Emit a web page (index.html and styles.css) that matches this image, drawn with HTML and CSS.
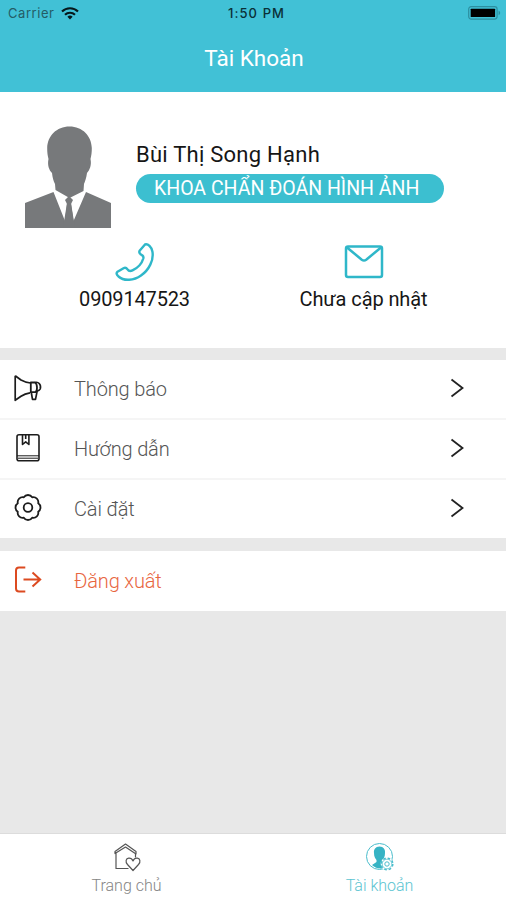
FILE: index.html
```html
<!DOCTYPE html>
<html lang="vi">
<head>
    <meta charset="UTF-8">
    <meta name="viewport" content="width=device-width, initial-scale=1.0">
    <link rel="stylesheet" href="styles.css">
    <title>Tài Khoản</title>
</head>
<body>

    <header class="header">
        <div class="status-bar">
            <div class="carrier">
                <span>Carrier</span>
                <svg width="18" height="13" viewBox="0 0 18 13" fill="none" stroke="#06181b" stroke-width="2.1">
                    <path d="M1 4.6a11.4 11.4 0 0 1 16 0"/>
                    <path d="M4 7.8a7.1 7.1 0 0 1 10 0"/>
                    <path d="M9 12.4L6.4 9.8a3.8 3.8 0 0 1 5.2 0z" fill="#06181b" stroke="none"/>
                </svg>
            </div>
            <span class="time">1:50 PM</span>
            <div class="battery">
                <svg width="33" height="14" viewBox="0 0 33 14">
                    <rect x="0.7" y="0.7" width="28.4" height="12.4" rx="2.5" fill="none" stroke="#2c8fa0" stroke-width="1.2"/>
                    <rect x="2.7" y="2.7" width="24.4" height="8.4" rx="0.6" fill="#000"/>
                    <path d="M30.6 4.8v4.4q1.6-.6 1.6-2.2t-1.6-2.2z" fill="#2c8fa0"/>
                </svg>
            </div>
        </div>
        <h1 class="title">Tài Khoản</h1>
    </header>

    <section class="profile">
        <div class="person">
            <svg class="avatar" width="88" height="103" viewBox="0 0 88 103" fill="#77797b">
                <path d="M45.500 .5C58.500 .5 67.500 10 67.800 22c.1 4-.5 8-1.300 11 1.300 6-.8 11-3.500 14-.7 5-1.800 8-3 11l-.5 7L45.500 72 31.500 64l-.5-6c-1.500-3-2.400-6-3-11-3-3-4.800-8-3.500-14-.8-3-1.400-7-1.300-11C23.500 10 32.500 .5 45.500 .5z"/>
                <path d="M29.500 66L1 77v25h86V77L62 66 49.500 95l-2.500-17 2-4-4-4-4 4 2 4L41 95z"/>
                <path d="M43 77h4l4 25H39z"/>
            </svg>
            <div class="info">
                <div class="name">Bùi Thị Song Hạnh</div>
                <div class="department">KHOA CHẨN ĐOÁN HÌNH ẢNH</div>
            </div>
        </div>
        <div class="contacts">
            <div class="contact phone">
                <svg width="40" height="38" viewBox="0 0 40 38" fill="none" stroke="#2fb7c9" stroke-width="2.4" stroke-linejoin="round">
                    <path d="M30 1.500C33 .5 36.500 4 37.400 8.500 39 17 34 27 26 32.500 19 37.500 9 38.500 3.500 33.500 1.500 31.500 1 30 2.500 28.800L8.500 25.200c1.500-.8 3-.3 4 1.200 1.200 1.800 3 2 5 1C22.500 25 27 20 28.300 15.500c.5-2-.2-3-1.800-3.700-1.800-.8-2.600-2.300-1.900-4z"/>
                </svg>
                <span>0909147523</span>
            </div>
            <div class="contact mail">
                <svg width="40" height="38" viewBox="0 0 40 38" fill="none" stroke="#2fb7c9" stroke-width="2.5" stroke-linejoin="round">
                    <rect x="2" y="3.500" width="36" height="30.500" rx="2"/>
                    <path d="M3 4.500l14.800 12.200q2.200 1.700 4.400 0L37 4.500"/>
                </svg>
                <span>Chưa cập nhật</span>
            </div>
        </div>
    </section>

    <ul class="menu">
        <li class="item">
            <svg class="icon" width="30" height="30" viewBox="0 0 30 30" fill="none" stroke="#1c1c1c" stroke-width="1.700" stroke-linejoin="round">
                <path d="M2.200 2.700v24.600L8 23.200q4-2.700 9-3.400M2.200 2.700L8 7q4.500 2.400 9.500 3"/>
                <path d="M17.800 9.500v9.700h4.500q1.700-.9 1.700-4.500 0-4-2-5.200z" stroke-width="1.800"/>
                <path d="M22 9.500q2.500-.8 4.200 1 2 2.200 1 5.500-.8 1.800-3.400 2.200M18.300 19.500l1.200 6.800h3l1.600-8" stroke-width="1.700"/>
            </svg>
            <span class="label">Thông báo</span>
            <svg class="arrow" width="14" height="20" viewBox="0 0 14 20"><path d="M1.500 1.500L12.500 10l-11 8.500"/></svg>
        </li>
        <li class="item">
            <svg class="icon" width="30" height="30" viewBox="0 0 30 30" fill="none" stroke="#1c1c1c" stroke-width="1.600" stroke-linejoin="round">
                <rect x="4" y="1.800" width="22" height="26" rx="2"/>
                <path d="M4 22.800h22M5 25.200h20" stroke-width="1"/>
                <path d="M9.500 2v9.500l3.200-2.700 3.200 2.700V2M12.700 2v4"/>
            </svg>
            <span class="label">Hướng dẫn</span>
            <svg class="arrow" width="14" height="20" viewBox="0 0 14 20"><path d="M1.500 1.500L12.500 10l-11 8.500"/></svg>
        </li>
        <li class="item">
            <svg class="icon" width="30" height="30" viewBox="0 0 30 30" fill="none" stroke="#1c1c1c" stroke-width="1.800" stroke-linejoin="round">
                <path d="M10.800 4.300a5 5 0 0 1 8.400 0a5 5 0 0 1 6 6a5 5 0 0 1 0 8.400a5 5 0 0 1-6 6a5 5 0 0 1-8.400 0a5 5 0 0 1-6-6a5 5 0 0 1 0-8.400a5 5 0 0 1 6-6z"/>
                <circle cx="15" cy="14.500" r="4.300"/>
            </svg>
            <span class="label">Cài đặt</span>
            <svg class="arrow" width="14" height="20" viewBox="0 0 14 20"><path d="M1.500 1.500L12.500 10l-11 8.500"/></svg>
        </li>
    </ul>

    <ul class="menu">
        <li class="item logout">
            <svg class="icon" width="30" height="30" viewBox="0 0 30 30" fill="none" stroke="#dc4a20" stroke-width="2">
                <path d="M12.300 2.500H6Q3 2.500 3 5.500v18q0 3 3 3h6.300"/>
                <path d="M10.500 14.500h16M19.500 7.500l7.700 7-7.700 7"/>
            </svg>
            <span class="label">Đăng xuất</span>
        </li>
    </ul>

    <nav class="tab-bar">
        <a class="tab">
            <svg width="30" height="30" viewBox="0 0 30 30" fill="none" stroke="#555" stroke-width="1.200" stroke-linejoin="round">
                <path d="M3 11.500v-2L13.500 2 24 9.500v2.500L13.500 5zM4 11v15.500h12.500M23.500 12v3.500"/>
                <path d="M21 28.500l-5.500-6c-2.500-3-1.500-6 1.200-6.300 2-.2 3.500 1 4.300 2.800.8-1.800 2.300-3 4.300-2.800 2.700.3 3.700 3.300 1.200 6.300z"/>
            </svg>
            <span>Trang chủ</span>
        </a>
        <a class="tab active">
            <svg width="30" height="30" viewBox="0 0 30 30" fill="none" stroke="#4abdcc" stroke-width="1">
                <circle cx="14.500" cy="14.500" r="13"/>
                <path d="M14.500 4.500c4 0 6 3 5.500 6.500 0 3.500-1.200 5.700-2.500 7v2l3.500 1.500v4q-8 3-14-2.500l4.500-3v-2c-1.300-1.300-2.500-3.500-2.500-7C8.500 7.500 10.500 4.500 14.500 4.500z" fill="#36b3c4" stroke="none"/>
                <circle cx="22" cy="22" r="6.300" fill="#fff" stroke="none"/>
                <circle cx="22" cy="22" r="5.800" stroke-width="1.500" stroke-dasharray="2.600 1.950"/>
                <circle cx="22" cy="22" r="4.800" stroke-width=".7"/>
                <circle cx="22" cy="22" r="2.200"/>
            </svg>
            <span>Tài khoản</span>
        </a>
    </nav>

</body>
</html>
```
FILE: styles.css
```css
* {
    box-sizing: border-box;
}

body {
    margin: 0;
    height: 100vh;
    display: flex;
    flex-direction: column;
    font-family: Roboto, sans-serif;
    background-color: #e8e8e8;
    overflow: hidden;
}

svg {
    display: block;
    flex-shrink: 0;
}

.header {
    height: 92px;
    background-color: #41c1d6;
}

.status-bar {
    display: grid;
    grid-template-columns: 1fr auto 1fr;
    align-items: center;
    height: 26px;
    padding: 0 5px 0 8px;
    font-family: Inter, sans-serif;
    font-size: 13px;
    color: #245c66;
}

.carrier {
    display: flex;
    align-items: center;
    gap: 7px;
    letter-spacing: 0.55px;
}

.time {
    padding-left: 4px;
    font-weight: 500;
    color: #0a3037;
    letter-spacing: 1.1px;
}

.battery {
    justify-self: end;
}

.title {
    margin: 0;
    padding-left: 2px;
    line-height: 65px;
    font-size: 22.5px;
    font-weight: 400;
    text-align: center;
    color: #fff;
}

.profile {
    height: 256px;
    padding: 34px 0 0;
    background-color: #fff;
}

.person {
    display: flex;
    gap: 24px;
    padding-left: 24px;
}

.info {
    padding-top: 14px;
}

.name {
    font-size: 22px;
    line-height: 30px;
    letter-spacing: 0.25px;
    color: #161616;
}

.department {
    width: 308px;
    height: 29px;
    margin-top: 4px;
    padding-left: 18px;
    border-radius: 15px;
    background-color: #3cbfd0;
    font-size: 19.5px;
    line-height: 29px;
    white-space: nowrap;
    color: #fff;
}

.contacts {
    display: flex;
    padding: 14px 28px 0 20px;
}

.contact {
    flex: 1;
    display: flex;
    flex-direction: column;
    align-items: center;
    gap: 5px;
    font-size: 20px;
    line-height: 26px;
    color: #161616;
}

.phone {
    letter-spacing: -0.15px;
}

.mail {
    letter-spacing: -0.1px;
}

.menu {
    margin: 12px 0 0;
    padding: 0;
    list-style: none;
    background-color: #fff;
}

.menu + .menu {
    margin-top: 13px;
}

.item {
    display: flex;
    align-items: center;
    height: 60px;
    padding: 0 42px 2px 13px;
    border-bottom: 2px solid #f5f5f5;
}

.item:last-child {
    height: 58px;
    border-bottom: none;
}

.item.logout {
    height: 60px;
}

.label {
    flex: 1;
    margin-left: 31px;
    padding-top: 2px;
    font-size: 20px;
    font-weight: 300;
    letter-spacing: -0.15px;
    color: #555;
}

.logout .label {
    color: #e8663f;
}

.arrow {
    fill: none;
    stroke: #222;
    stroke-width: 1.8;
}

.tab-bar {
    display: flex;
    height: 67px;
    margin-top: auto;
    border-top: 1px solid #dcdcdc;
    background-color: #fff;
}

.tab {
    flex: 1;
    display: flex;
    flex-direction: column;
    align-items: center;
    padding-top: 8px;
    font-size: 16px;
    font-weight: 300;
    line-height: 28px;
    color: #858585;
}

.tab.active {
    color: #5cc4d1;
}
```
